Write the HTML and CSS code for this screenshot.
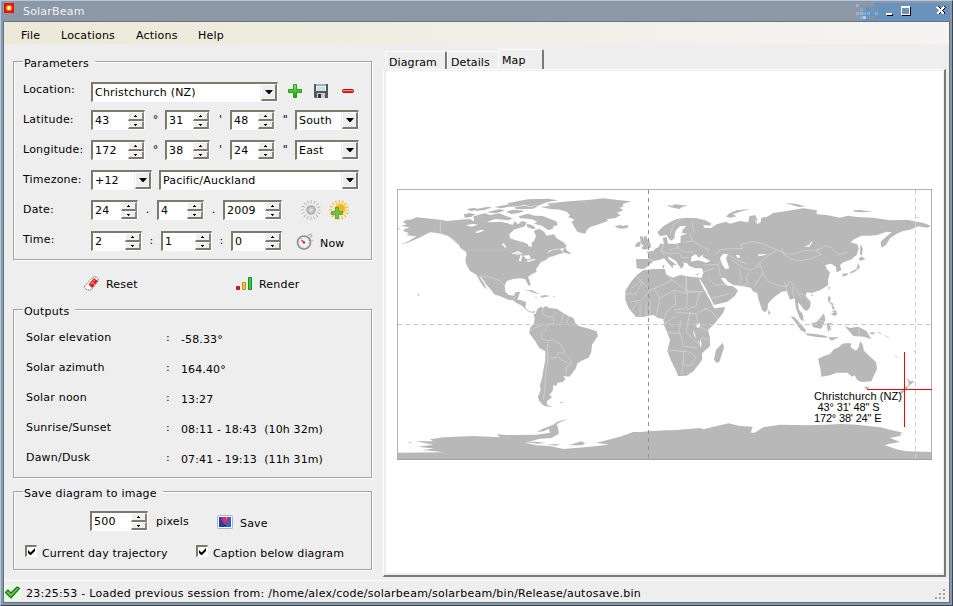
FILE: index.html
```html
<!DOCTYPE html>
<html lang="en">
<head>
<meta charset="utf-8">
<title>SolarBeam</title>
<link rel="stylesheet" href="styles.css">
</head>
<body>
<svg class="defs" width="0" height="0">
  <defs>
    <symbol id="drop" viewBox="0 0 8 4"><path d="M0 0h8L4.500 4h-1z" fill="#000"/></symbol>
    <symbol id="up" viewBox="0 0 3 2"><path d="M1 0h1v1h1v1H0V1h1z" fill="#000"/></symbol>
    <symbol id="down" viewBox="0 0 3 2"><path d="M0 0h3v1H2v1H1V1H0z" fill="#000"/></symbol>
    <symbol id="tick" viewBox="0 0 7 7"><path d="M0 2v3l2 2h1l4-4V0L2.500 4.500z" fill="#000"/></symbol>
    <symbol id="rays" viewBox="0 0 22 20">
      <circle cx="11" cy="10" r="8.300" fill="none" stroke="currentColor" stroke-width="3.400" stroke-dasharray="1.200 2.060" stroke-dashoffset=".6"/>
    </symbol>
    <linearGradient id="green" x2="0" y2="1"><stop stop-color="#8be36b"/><stop offset="1" stop-color="#169a12"/></linearGradient>
    <radialGradient id="orb"><stop stop-color="#e8e8e8"/><stop offset="1" stop-color="#a2a2a2"/></radialGradient>
  </defs>
</svg>
<div class="window">
  <header class="titlebar">
    <svg class="app-icon" width="10" height="10"><path fill="#e3170d" d="M0 0h10v10H0z"/><circle cx="5" cy="5" r="3" fill="#ff8a1e"/><circle cx="5" cy="5" r="2" fill="#fff36a"/><path fill="#fff" d="M4 4h2v2H4z"/></svg>
    <span class="title">SolarBeam</span>
    <svg class="title-controls" width="95" height="18" shape-rendering="crispEdges">
      <path fill="#6b92bb" d="M19 0h76v18H19zM8 4h11v14H8z"/>
      <path fill="#a5b1c0" d="M1 1h3v3H1zM1 9h3v3H1zM5 9h3v3H5z"/>
      <path fill="#8795a3" d="M5 1h3v3H5zM12 1h3v3h-3zM8 5h3v3H8zM16 5h3v3h-3zM12 13h3v3h-3zM16 13h3v3h-3z"/>
      <path fill="#78b0e8" d="M5 5h3v3H5zM8 9h3v3H8zM12 9h3v3h-3zM5 13h3v3H5zM20 9h3v3h-3z"/>
      <path fill="#a9d6ff" d="M8 13h3v3H8z"/>
      <path fill="#000" d="M32 11h6v2h-6zM47 4h9v9h-9z"/>
      <path fill="#fff" d="M31 10h6v2h-6zM46 3h9v9h-9z"/>
      <path fill="#6b92bb" d="M47 5h7v6h-7z"/>
      <path d="M83 4l7 7M90 4l-7 7" stroke="#000" stroke-width="1.500"/>
      <path d="M82 4l7 7M89 4l-7 7" stroke="#fff" stroke-width="1.600"/>
    </svg>
  </header>
  <div class="client">
  <nav class="menu"><span class="m-file">File</span><span class="m-loc">Locations</span><span class="m-act">Actions</span><span>Help</span></nav>
  <main class="content">
    <section class="controls">
      <div class="group params">
        <div class="legend">Parameters</div>
        <div class="row row-location"><label>Location:</label>
          <div class="combo w187">Christchurch (NZ)<i><svg width="8" height="4"><use href="#drop"/></svg></i></div>
          <svg class="ic-add" width="16" height="16"><path d="M6.500 1.500h3v5h5v3h-5v5h-3v-5h-5v-3h5z" fill="url(#green)" stroke="#22a318"/></svg>
          <svg class="ic-disk" width="16" height="16"><path d="M1 1h14v14H2l-1-1z" fill="#55585c"/><path d="M3 1h10v7H3z" fill="#e6f0f8"/><path d="M3 1h10v2H3z" fill="#8fb5d5"/><path d="M4 5h8M4 7h8" stroke="#b8c8d4"/><path d="M4 10h8v5H4z" fill="#c9ccd0"/><path d="M5 11h3v4H5z" fill="#34373b"/></svg>
          <svg class="ic-remove" width="14" height="16"><rect x="1.500" y="6.500" width="11" height="3" rx="1" fill="#e22a2a" stroke="#c80f12"/><path d="M2 7.500h10" stroke="#f58a85"/></svg>
        </div>
        <div class="row"><label>Latitude:</label>
          <div class="spin w55">43<i><b><svg width="3" height="2"><use href="#up"/></svg></b><b><svg width="3" height="2"><use href="#down"/></svg></b></i></div><span class="sep">°</span>
          <div class="spin w45">31<i><b><svg width="3" height="2"><use href="#up"/></svg></b><b><svg width="3" height="2"><use href="#down"/></svg></b></i></div><span class="sep">'</span>
          <div class="spin w45">48<i><b><svg width="3" height="2"><use href="#up"/></svg></b><b><svg width="3" height="2"><use href="#down"/></svg></b></i></div><span class="sep">"</span>
          <div class="combo w64">South<i><svg width="8" height="4"><use href="#drop"/></svg></i></div>
        </div>
        <div class="row"><label>Longitude:</label>
          <div class="spin w55">172<i><b><svg width="3" height="2"><use href="#up"/></svg></b><b><svg width="3" height="2"><use href="#down"/></svg></b></i></div><span class="sep">°</span>
          <div class="spin w45">38<i><b><svg width="3" height="2"><use href="#up"/></svg></b><b><svg width="3" height="2"><use href="#down"/></svg></b></i></div><span class="sep">'</span>
          <div class="spin w45">24<i><b><svg width="3" height="2"><use href="#up"/></svg></b><b><svg width="3" height="2"><use href="#down"/></svg></b></i></div><span class="sep">"</span>
          <div class="combo w64">East<i><svg width="8" height="4"><use href="#drop"/></svg></i></div>
        </div>
        <div class="row"><label>Timezone:</label>
          <div class="combo w61">+12<i><svg width="8" height="4"><use href="#drop"/></svg></i></div>
          <div class="combo zone">Pacific/Auckland<i><svg width="8" height="4"><use href="#drop"/></svg></i></div>
        </div>
        <div class="row row-date"><label>Date:</label>
          <div class="spin w47">24<i><b><svg width="3" height="2"><use href="#up"/></svg></b><b><svg width="3" height="2"><use href="#down"/></svg></b></i></div><span class="sep s19">.</span>
          <div class="spin w47">4<i><b><svg width="3" height="2"><use href="#up"/></svg></b><b><svg width="3" height="2"><use href="#down"/></svg></b></i></div><span class="sep s19">.</span>
          <div class="spin w59">2009<i><b><svg width="3" height="2"><use href="#up"/></svg></b><b><svg width="3" height="2"><use href="#down"/></svg></b></i></div>
          <svg class="ic-sun grey" width="22" height="20"><use href="#rays"/><circle cx="11" cy="10" r="4.800" fill="url(#orb)"/></svg>
          <svg class="ic-sun gold" width="22" height="20"><use href="#rays"/><circle cx="12" cy="9" r="5.300" fill="#fdb813"/><path d="M7.500 7.500h3v4h4v3h-4v4h-3v-4h-4v-3h4z" fill="#79c143" stroke="#5fa636"/></svg>
        </div>
        <div class="row row-time"><label>Time:</label>
          <div class="spin w51">2<i><b><svg width="3" height="2"><use href="#up"/></svg></b><b><svg width="3" height="2"><use href="#down"/></svg></b></i></div><span class="sep s19">:</span>
          <div class="spin w51">1<i><b><svg width="3" height="2"><use href="#up"/></svg></b><b><svg width="3" height="2"><use href="#down"/></svg></b></i></div><span class="sep s19">:</span>
          <div class="spin w51">0<i><b><svg width="3" height="2"><use href="#up"/></svg></b><b><svg width="3" height="2"><use href="#down"/></svg></b></i></div>
          <svg class="ic-clock" width="18" height="18"><circle cx="8" cy="9.500" r="6.500" fill="#f4f4f4" stroke="#8e8e8e" stroke-width="1.700"/><circle cx="8" cy="9.500" r="4.500" fill="none" stroke="#aaa" stroke-dasharray="1 2.530"/><path d="M5.500 7L8 9.500" stroke="#d8342a" fill="none" stroke-width="1.300"/><circle cx="8" cy="9.500" r="1.200" fill="#b33"/><path d="M11.500 2.500l3-1.500 1.500 2-2 1.500M15.500 7l1.500 1" fill="none" stroke="#b5b5b5" stroke-width="1.300"/></svg>
          <span class="now">Now</span>
        </div>
      </div>
      <div class="actions">
        <svg class="ic-reset" width="17" height="16"><path d="M1 11L10 1h3.500L16 4 8 14H4z" fill="#fff" stroke="#777" stroke-dasharray="1.500 .7"/><path d="M5.500 8.500l5.500-6.500L15 5 9 12z" fill="#d9201c"/><path d="M7.500 8.500l4.500-5M9 6.500l3.500 2.500" stroke="#f7a19b"/></svg>
        <span class="reset">Reset</span>
        <svg class="ic-render" width="17" height="13"><path d="M.5 9.500h3v3h-3z" fill="#e0272b" stroke="#b31216"/><path d="M6.500 5.500h3v7h-3z" fill="#f8c23e" stroke="#d08c1a"/><path d="M12.500 .5h3v12h-3z" fill="#2ed23e" stroke="#149022"/></svg>
        <span class="render">Render</span>
      </div>
      <div class="group outputs">
        <div class="legend">Outputs</div>
        <div class="out"><span>Solar elevation</span><em>:</em><strong>-58.33°</strong></div>
        <div class="out"><span>Solar azimuth</span><em>:</em><strong>164.40°</strong></div>
        <div class="out"><span>Solar noon</span><em>:</em><strong>13:27</strong></div>
        <div class="out"><span>Sunrise/Sunset</span><em>:</em><strong>08:11 - 18:43&nbsp; (10h 32m)</strong></div>
        <div class="out"><span>Dawn/Dusk</span><em>:</em><strong>07:41 - 19:13&nbsp; (11h 31m)</strong></div>
      </div>
      <div class="group save">
        <div class="legend">Save diagram to image</div>
        <div class="size">
          <div class="spin w57">500<i><b><svg width="3" height="2"><use href="#up"/></svg></b><b><svg width="3" height="2"><use href="#down"/></svg></b></i></div>
          <span class="px">pixels</span>
          <svg class="ic-image" width="16" height="14"><rect x=".5" y=".5" width="15" height="13" rx="1" fill="#fff" stroke="#aab4c4"/><path d="M2 2h12v10H2z" fill="#2b66cf"/><path d="M2 2h5v10H2z" fill="#17429f"/><path d="M4 2h8v3L9 9H7L4 5z" fill="#b3259a"/><path d="M6 2h2v6H7z" fill="#ee3a35"/><path d="M9 2h1L9 7z" fill="#ffbb30"/><path d="M7 10h2v1H7z" fill="#311"/></svg>
          <span class="save-text">Save</span>
        </div>
        <div class="checks">
          <span class="box"><svg width="7" height="7"><use href="#tick"/></svg></span><span class="c1">Current day trajectory</span>
          <span class="box"><svg width="7" height="7"><use href="#tick"/></svg></span><span class="c2">Caption below diagram</span>
        </div>
      </div>
    </section>
    <section class="viewer">
      <div class="tabs"><span class="tab t1">Diagram</span><span class="tab t2">Details</span><span class="tab active">Map</span></div>
      <div class="panel">
        <svg class="map" width="536" height="272" viewBox="397 189 536 272">
          <g fill="#b8b8b8">
            <!-- North America, Greenland, Iceland, Iberia, British Isles -->
            <g transform="translate(390 185) scale(.333333)">
              <path d="M34 122L50 118 38 111 50 104 62 104 80 97 100 99 152 104 172 108 210 104 240 102 250 108 285 108 300 112 330 110 350 114 368 120 374 108 384 118 396 108 410 112 405 124 385 130 372 134 358 148 360 160 378 166 400 172 412 176 416 184 426 186 424 174 432 168 438 152 432 140 436 134 450 132 462 140 470 152 480 150 492 148 500 160 520 172 530 182 524 190 500 192 480 196 468 206 486 196 510 192 520 204 506 208 490 214 478 216 466 226 452 232 446 242 438 252 440 260 425 268 414 276 420 290 422 300 416 302 410 290 405 282 390 280 370 282 350 288 344 302 346 320 356 330 372 332 376 322 390 320 386 334 382 344 396 346 408 352 406 368 414 376 424 380 436 378 432 384 420 382 408 374 396 362 380 354 368 346 356 344 330 334 312 328 306 318 290 300 276 280 267 273 280 292 292 314 280 304 268 286 260 270 240 258 230 240 226 225 230 208 228 200 212 190 205 178 190 164 176 154 160 148 140 144 120 142 104 150 88 158 56 172 30 179 56 168 80 154 70 154 50 150 56 144 40 138 44 132 60 128z"/>
              <path d="M222 88L238 84 256 88 244 96 224 98zM230 72l24-4 10 6-22 4zM258 72l36-7 12 2-22 8-28 3zM250 94l34-9 16 5 28-5 20 8 20 7-12 6-40-4-24 8-40-2zM290 82l40-10 14 5-28 8zM312 66l46-8 16 4-40 8zM348 80l20-6 36 3-14 6-26 4zM352 54l40-6 28 6-26 8-30 3zM374 66l30-4 16 3 28-4-18 10-52 2zM374 50l40-7 60-2 30 5-34 6-20 8-30 4-30-6zM386 94l28-8 20 6 24 1 40 16 6 11-14 4-2 8-14 3-18-13-24-6 10-6-18-8-34-2zM410 116l16 4 12 10-10 2-16-6zM504 110l-8 4-6-4zM526 186l4 10 14 10-6 1-22-6z"/>
              <path d="M452 66L480 62 470 56 520 50 600 44 640 40 690 46 724 49 700 56 698 66 688 68 700 76 680 84 692 90 675 100 650 102 654 108 620 120 600 126 590 136 586 146 574 144 562 140 552 124 545 110 554 104 535 96 540 90 530 80 510 74 480 72zM674 124L690 120 700 123 712 119 716 127 700 131 684 130z"/>
              <path d="M404 318L422 314 450 328 434 325 418 318zM452 332l16-2 10 4-24 4zM434 335l10 1-6 2zM488 334l10 1-8 2zM82 326l8 4-5 3zM24 130h5v3h-5z"/>
              <path d="M738 222L778 224 774 242 766 250 750 252 740 248zM762 155l8-2 2 9 8 10 4 14-18 5 4-9-10-12zM736 180l8-10 8 2-1 12-14 3z"/>
            </g>
            <!-- South America and the Antarctic peninsula side -->
            <g transform="translate(390 300) scale(.333333)">
              <path d="M430 42L436 42 442 28 452 20 460 24 466 18 478 24 500 26 515 36 535 48 550 54 556 68 562 76 574 80 590 84 620 94 624 108 606 134 604 156 596 173 575 182 562 190 558 204 545 222 538 230 520 228 526 238 518 246 502 248 500 257 490 256 488 272 478 284 486 292 470 304 472 314 488 321 462 318 448 304 444 290 452 270 450 255 456 235 460 210 466 180 466 154 448 144 436 124 418 100 420 84 432 70 434 54zM506 306l14-1-4 4z"/>
              <path d="M22 478L22 458 162 457 96 450 132 446 84 440 130 434 76 424 130 424 120 418 160 412 250 408 330 412 320 403 350 405 440 404 480 398 476 386 460 394 440 396 458 386 490 374 500 366 534 356 500 372 506 392 506 402 484 414 450 416 405 428 440 436 480 438 520 447 600 440 656 434 620 428 690 410 730 396 760 396 800 392 842 391 842 478zM54 428l8-2 4 4zM536 436l38-12 12 6-10 6zM404 426l34-1 30 4-26 2zM470 433l42 0-16 4z"/>
            </g>
            <!-- Eurasia -->
            <g transform="translate(640 185) scale(.333333)">
              <path d="M0 222L24 222 28 212 20 200 40 198 44 192 56 186 60 176 72 176 68 158 80 156 84 176 110 176 122 172 90 166 80 150 60 154 52 142 70 124 90 112 110 102 140 98 170 100 196 106 215 116 210 122 190 120 192 128 212 130 230 118 258 110 270 116 300 108 325 112 328 94 346 90 352 104 350 118 362 112 364 98 380 96 400 84 440 78 490 70 530 76 530 88 560 90 600 98 625 92 650 96 700 98 750 106 800 104 850 114 872 122 864 128 835 124 810 134 790 138 770 146 750 160 738 180 724 188 722 170 735 158 755 142 740 140 712 150 690 152 664 152 640 164 632 172 652 178 656 190 650 210 632 224 610 232 600 240 604 256 590 262 588 246 574 236 556 240 560 252 570 262 564 285 565 300 540 316 515 324 500 322 497 332 512 350 510 368 500 378 490 372 484 362 474 352 476 372 490 392 490 408 478 396 468 370 464 340 450 344 440 318 425 320 400 338 384 356 382 376 374 382 366 374 355 342 352 324 340 320 332 308 310 304 280 300 264 290 256 280 243 278 248 288 262 302 278 303 294 316 285 332 262 350 222 360 212 340 195 306 180 282 186 276 190 262 186 250 165 250 146 242 144 236 130 232 132 240 125 252 115 240 108 228 84 214 86 222 110 240 100 240 98 250 86 236 72 220 60 224 40 228 28 240 10 252 0 250zM0 152l10 4 2 14 12 8 8 10-18 6-10-4 6-8-8-8z"/>
              <path d="M258 96L266 86 290 76 332 72 300 80 278 88 290 94 272 98zM80 60l16 2 10-4 20 2 20 2-18 3-10 7-14-3-14-3zM435 54l30 2 32 8-20 2zM640 76l24-1 6 2 30 2-30 3-26-2zM824 96l16 2-8 2zM661 176l7 14-2 22-6-5zM656 222l8-8 12 8-14 6zM654 234l6 14-18 14-14 4 4-6 18-8zM608 266l16-2-2 6-14 6zM564 308l6-4-2 12zM384 374l8 10-6 6zM512 330l8-2-4 6zM564 334l8 2-2 14 12 8-4 4-14-14zM574 362l8 2 2 12-6-4zM572 386l14-6 6 10-10 2zM68 240l5-1-1 11h-4zM164 269l16-4-8 6z"/>
            </g>
            <!-- Africa -->
            <path d="M643.300 270.300L636.700 275 630.700 282.300 625.300 291 625.300 300 628.700 308.300 636 317 643 317 653.300 315 658 318 663.300 319 664 325 667.300 332.700 670 340 667.300 350.700 670.700 360 676.700 372 678 376 686.700 375.700 693.300 371.300 698.300 365 702 360 702 353.300 710 346 710 338 708 330 715 323.300 723 313 725.300 307 714 308.300 710 300 703.300 288.300 699.300 279.700 701 277.700 690 276.700 680 275 673 277.700 666 274.300 665 269 653 269z"/>
            <!-- Australia, Indonesia, Madagascar, New Zealand, Antarctica -->
            <g transform="translate(640 310) scale(.333333)">
              <path d="M534 146L540 144 552 138 570 132 582 118 596 112 606 102 614 100 634 100 632 112 648 122 656 112 660 94 668 104 672 122 690 140 708 156 711 178 700 200 694 214 664 216 652 210 644 196 636 200 622 188 590 188 570 196 544 200 542 180zM672 230h16l-4 8h-6zM800 202l10 12 14-1-14 12-6 4 2-10zM800 228l6 2-8 10-14 12-8-3 18-14zM248 98l4 14-14 44-10 2-6-10 6-28z"/>
              <path d="M452 18l12 4 34 38-2 8-14-8-14-20zM472 0l14 8 4 26-10-8zM514 40L530 36 552 10 556 30 544 56 520 52zM498 70l28 2 34 6v5l-30-2-30-5zM560 40l20-2-14 8 10 4-6 2 6 12-8-6-4 10zM564 82h34l-24 10zM614 48L630 54 656 50 680 64 694 88 672 80 640 78zM686 68l20-2-8 8zM716 66l8 4-2 2-8-4zM736 76l12 7-1 2-12-7zM760 134l12 8-2 1zM574 6l14-6 2 12-8-6zM820 124l6-1-3 4z"/>
              <path d="M0 450L0 366 110 360 180 354 190 358 265 340 300 348 338 350 332 368 344 368 370 352 420 344 500 346 560 344 600 342 650 344 720 352 788 368 778 374 788 376 750 384 780 396 745 402 735 406 770 418 800 424 876 426 876 450z"/>
            </g>
          </g>
          <!-- seas and lakes -->
          <g fill="#fff">
            <path transform="translate(390 185) scale(.333333)" d="M228 120l22-3 14 2-20 6zM254 142l20-8 10 2-20 8zM335 178l7-3 8 14-6-2zM364 206l20-8 14 8-12 3zM386 228l6-18 5 1-4 18zM399 212l18-2 6 10-10 4zM408 229l24-8 6 2-22 8z"/>
            <path transform="translate(640 185) scale(.333333)" d="M104 148L108 136 120 124 140 122 128 134 126 144 142 146 122 152 122 172 104 176 94 168 104 158zM152 230L155 214 168 208 176 218 190 208 188 216 212 228 198 233 176 226zM240 218L250 206 264 208 258 220 262 232 268 250 256 252 246 238zM288 210l10 0 2 8-8 0zM354 208l28 0-10 3-16 3zM492 184l16-4 6-12 2 6-8 12zM345 102l10 14-8-6z"/>
            <path transform="translate(640 310) scale(.333333)" d="M168 42l12-2-1 12-8 2zM160 60l4 10 4 16-6-10zM180 88l5 12-2 14-4-12z"/>
          </g>
          <!-- national borders -->
          <g fill="none" stroke="#dcdcdc" stroke-width="1.800" stroke-linejoin="round">
            <path transform="translate(390 185) scale(.333333)" d="M151 104v42l24 8 30 26M270 273l32 4 26 10 16 14M370 344l8-12M392 352l14-4"/>
            <path stroke="#c6c6c6" transform="translate(390 185) scale(.333333)" d="M228 197h124l42 12"/>
            <path transform="translate(390 300) scale(.333333)" d="M460 20l-4 22 16 8 18 0 2 20-20 4-4 16-14 10 0 16 18 6 18-2 22 12 10 20 2 8 14 14 6 18-14 8-4 26M472 126l2 48-4 26-4 30-2 40-4 30M480 174l26-2 10 8 18 10M420 92l14-8 20-8M490 46l12-10M520 40l-6 28M536 50l-6 20M502 166l2-8 18 2"/>
            <path transform="translate(640 185) scale(.333333)" d="M72 176l-8 20 20 10 34-2 8 14 22 0M110 176l4 14 20 12 22-2 6 12M128 172l30-4 28 18 18 6 0 12M162 140l-6-30M90 150l10-32 20-14M150 146l6 20M60 196l14 16M84 196l30-8M24 222l16 4M230 208l8-14 40-4 30 2-6-14 36-8 26 4 30 14 26 10 14 8 22 2 40-12 26 2 20-6 16-10 14 4 20 22 30-6M406 198l-22 14-20 18-16 14M424 190l8 18 18 12 24 8 36-6 34-14-14-8 6-10M278 226l30 22 24 6 30-12M262 208l26 16 34 12M298 250l6 34-6 16M332 254l-14 22 6 20-16 6M362 242l8 20-14 22-14 20M366 262l20 28 30 12 24 2 10-16 12 14-6 20 10 14M434 290l8 30M466 310l18 30M478 324l14 6 14 18M190 240l44-2 8 34M190 262l34-14M204 280l22 20 30-2M216 340l50-14M238 236l6-16M140 276v42l50 2"/>
            <path stroke-width=".6" d="M642 279L632 288M636 276l14 14 10-4 12-6-6-6M626 294h10l6-12M650 290l-8 10-12 2M632 310l6-8M640 317v-14M646 302v14M650 300v16M656 316l4-18-6-10M672 280l14 10M686 276v16h16M660 298l14-8 14 4M674 290l2 14-10 8-2 8M688 292l-2 16-12 2M700 292l-4 14-10 4M676 312l20 2 12-6M667 332l14 2 2 12 14 2M681 320l-2 14M690 312l-4 20 10 10M696 314l2 12 12 6M668 350l22 2M684 350l-2 24M690 352l6 6-6 8-8-2M696 342l6 2M664 324l12-8M698 342l4-4 8 2M704 308l8 4 6 8"/>
            <path transform="translate(640 310) scale(.333333)" d="M656 50l2 28M520 40l16-10 16 4"/>
          </g>
          <g shape-rendering="crispEdges" fill="none">
            <path d="M397 324.500H932" stroke="#c9c9c9" stroke-dasharray="5 3"/>
            <path d="M915.500 190V459" stroke="#d2d2d2" stroke-dasharray="5 3"/>
            <path d="M648.500 190V459" stroke="#919191" stroke-dasharray="4 4"/>
            <path d="M397.500 459.500V189.500H931.500V459.500" stroke="#b0b0b0"/>
            <path d="M397 459.500H932" stroke="#a0a0a0"/>
            <path d="M867 389.500H932M904.500 352V427" stroke="#f00"/>
          </g>
          <g class="pin"><text x="814" y="400" textLength="88">Christchurch (NZ)</text><text x="817.500" y="411" textLength="62">43° 31' 48" S</text><text x="814" y="422" textLength="67.500">172° 38' 24" E</text></g>
        </svg>
      </div>
    </section>
  </main>
  <footer class="status">
    <svg class="ic-ok" width="17" height="15"><path fill="#e6fbe3" d="M0 0h17v15H0z"/><path d="M1.500 7.500L4 5l3 3 6-6 2.500 1.500L7 13z" fill="#68c14c" stroke="#246b20" stroke-width="1.200"/></svg>
    <span>23:25:53 - Loaded previous session from: /home/alex/code/solarbeam/solarbeam/bin/Release/autosave.bin</span>
    <svg class="grip" width="11" height="11"><path d="M8 0h2v2H8zM4 4h2v2H4zM8 4h2v2H8zM0 8h2v2H0zM4 8h2v2H4zM8 8h2v2H8z" fill="#a5a596"/></svg>
  </footer>
  </div>
</div>
</body>
</html>
```
FILE: styles.css
```css
* { box-sizing: border-box; }
body {
  margin: 0;
  font: 11px/16px "DejaVu Sans", sans-serif;
  letter-spacing: .2px;
  color: #000;
  overflow: hidden;
}
svg { display: block; flex: none; }
.defs { position: absolute; }
.window {
  width: 953px;
  height: 606px;
  background: #8798ac;
  border: 1px solid;
  border-color: #b5cae0 #3c4650 #3c4650 #b5cae0;
  padding: 0 2px 2px;
}
.titlebar {
  height: 20px;
  background: #8c98a6;
  color: #eef2f6;
  display: flex;
}
.app-icon { margin: 2px 0 0 1px; }
.title { margin: 3px 0 0 9px; }
.title-controls { margin: 2px 0 0 auto; }
.client {
  height: 582px;
  background: #eee;
  border: 1px solid #66727f;
  display: flex;
  flex-direction: column;
}
.menu {
  height: 22px;
  flex: none;
  background: linear-gradient(90deg, #ece9d8, #f0ede4 45%, #f5f4f2);
  display: flex;
  padding: 6px 0 0 17px;
}
.m-file { width: 40px; }
.m-loc { width: 75px; }
.m-act { width: 62px; }
.content { display: flex; height: 536px; flex: none; }
.controls { width: 379px; padding: 17px 0 0 9px; flex: none; }
.group {
  width: 359px;
  border: 1px solid #a5a596;
  box-shadow: 1px 1px 0 #fff, inset 1px 1px 0 #fff;
}
.params { height: 199px; }
.outputs { height: 169px; }
.save { height: 79px; margin-top: 13px; }
.legend {
  width: max-content;
  margin: -6px 0 0 9px;
  padding: 0 6px 0 1px;
  background: #eee;
}
.row { display: flex; height: 30px; padding-left: 9px; }
.row-location { height: 28px; margin-top: 10px; }
.row-date { height: 31px; }
.row label { width: 68px; padding-top: 2px; flex: none; }
.row-location label { padding-top: 0; }
.row-time label { padding-top: 1px; }
.combo, .spin {
  height: 20px;
  flex: none;
  background: #fff;
  border: solid;
  border-width: 2px 1px 1px 2px;
  border-color: #7c7a6c #fff #fff #7c7a6c;
  padding: 1px 0 0 2px;
  display: flex;
  justify-content: space-between;
  white-space: nowrap;
}
.combo i {
  width: 16px;
  height: 17px;
  margin-top: -1px;
  background: #eee;
  border: solid;
  border-width: 1px 2px 2px 1px;
  border-color: #fff #7c7a6c #7c7a6c #fff;
  box-shadow: -1px 0 0 #eee;
  display: flex;
  align-items: center;
  justify-content: center;
}
.spin i { width: 16px; margin-top: -1px; display: flex; flex-direction: column; }
.spin b {
  height: 9px;
  background: #eee;
  border: solid;
  border-width: 1px 2px 2px 1px;
  border-color: #fff #8a887a #7c7a6c #fff;
  display: flex;
  align-items: center;
  justify-content: center;
}
.spin b + b { height: 8px; }
.w187 { width: 187px; }
.w64 { width: 64px; }
.w61 { width: 61px; }
.w59 { width: 59px; }
.w57 { width: 58px; }
.w55 { width: 54px; }
.w51 { width: 51px; }
.w47 { width: 47px; }
.w45 { width: 45px; }
.zone { width: 200px; margin-left: 7px; }
.sep { width: 20px; padding: 2px 0 0 1px; text-align: center; flex: none; }
.s19 { width: 19px; padding-left: 0; }
.ic-add { margin: 1px 0 0 9px; }
.ic-disk { margin: 1px 0 0 10px; }
.ic-remove { margin: 1px 0 0 12px; }
.ic-sun { margin-left: 18px; }
.grey { color: #c0c0c0; }
.gold { color: #fdbb1f; margin-left: 6px; }
.ic-clock { margin: 2px 0 0 14px; }
.now { margin: 5px 0 0 6px; }
.actions { display: flex; height: 49px; padding: 16px 0 0 70px; }
.reset { width: 129px; margin: 1px 0 0 6px; }
.ic-render { margin: 1px 0 0 1px; }
.render { margin: 1px 0 0 6px; }
.out { display: flex; height: 30px; padding-left: 12px; }
.outputs .legend { margin-bottom: 10px; }
.out span { width: 140px; }
.out em { width: 15px; font-style: normal; }
.out strong { font-weight: normal; padding-top: 2px; letter-spacing: .12px; }
.size { display: flex; height: 34px; margin-top: 9px; padding-left: 76px; }
.px { width: 61px; margin: 3px 0 0 8px; }
.ic-image { margin-top: 4px; }
.save-text { margin: 5px 0 0 7px; }
.checks { display: flex; padding-left: 11px; letter-spacing: .16px; }
.box {
  width: 12px;
  height: 12px;
  background: #fff;
  border: solid;
  border-width: 2px 1px 1px 2px;
  border-color: #7c7a6c #fff #fff #7c7a6c;
  padding: 1px;
}
.c1 { width: 154px; margin: 1px 0 0 5px; }
.c2 { margin: 1px 0 0 5px; }
.viewer { width: 563px; padding-top: 5px; }
.tabs { display: flex; height: 20px; align-items: flex-end; padding-left: 2px; }
.tab {
  height: 18px;
  padding: 3px 0 0 3px;
  border: solid;
  border-width: 1px 2px 0 1px;
  border-color: #fff #7c7a6c #fff #fff;
  border-radius: 2px 2px 0 0;
  letter-spacing: .1px;
}
.t1 { width: 62px; }
.t2 { width: 51px; border-right: 0; }
.active { width: 46px; height: 20px; background: #eee; }
.panel {
  height: 508px;
  background: #fff;
  border: solid;
  border-width: 1px 2px 2px 1px;
  border-color: #fff #7c7a6c #7c7a6c #fff;
  box-shadow: inset 2px 1px 0 #eee, inset -1px -2px 0 #eee;
}
.map { margin: 119px 0 0 13px; }
.pin { font: 11px "Liberation Sans", sans-serif; letter-spacing: 0; }
.status {
  flex: 1;
  border-top: 1px solid #fff;
  display: flex;
  padding-top: 4px;
  white-space: nowrap;
  letter-spacing: .26px;
}
.status span { margin-top: 1px; }
.ic-ok { margin-right: 5px; }
.grip { margin: 4px 3px 0 auto; }
```
